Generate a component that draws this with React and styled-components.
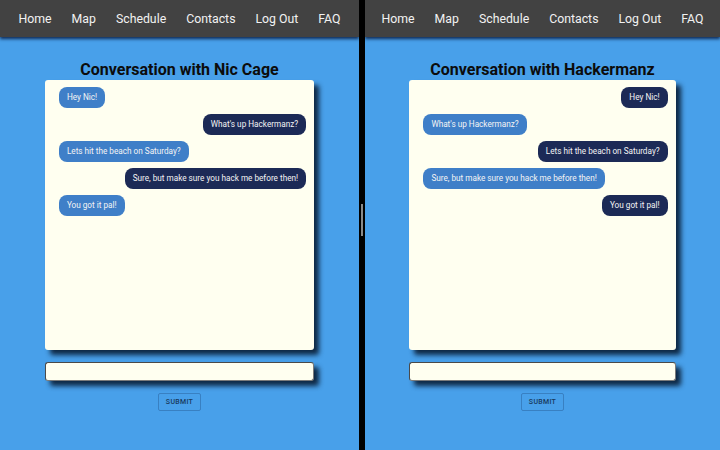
import styled, { createGlobalStyle } from "styled-components";

const GlobalStyle = createGlobalStyle`
  html, body {
    margin: 0;
    padding: 0;
    height: 100%;
    overflow: hidden;
  }
  body {
    font-family: Roboto, "Liberation Sans", sans-serif;
  }
`;

const Screen = styled.div`
  display: flex;
  width: 720px;
  height: 450px;
  background: #000;
`;

const Pane = styled.div`
  flex: ${(p) => (p.$fixed ? "0 0 359px" : "1")};
  display: flex;
  flex-direction: column;
  align-items: center;
  background: #48a0ea;
  overflow: hidden;
`;

const Divider = styled.div`
  flex: 0 0 6px;
  display: flex;
  align-items: center;
  justify-content: center;
  background: #000;
`;

const Handle = styled.div`
  width: 2px;
  height: 32px;
  margin-top: -10px;
  background: #8a8a8a;
`;

const NavBar = styled.nav`
  align-self: stretch;
  height: 37px;
  display: flex;
  align-items: center;
  justify-content: center;
  background: #424242;
  box-shadow: 0 2px 3px rgba(10, 30, 70, 0.9);
  position: relative;
  z-index: 1;
`;

const NavItem = styled.span`
  padding: 0 10px;
  font-size: 12.3px;
  color: #f2f2f2;
  white-space: nowrap;
`;

const Title = styled.h2`
  margin: 23px 0 0;
  font-size: 16px;
  line-height: 20px;
  font-weight: 700;
  color: #0c0c0c;
`;

const ChatBox = styled.div`
  box-sizing: border-box;
  width: 75%;
  height: 270px;
  padding: 7px 8px 0 14px;
  display: flex;
  flex-direction: column;
  gap: 6px;
  background: #fffff0;
  border-radius: 3px;
  box-shadow: 5px 5px 5px rgba(5, 20, 40, 0.85);
`;

const Bubble = styled.div`
  align-self: ${(p) => (p.$mine ? "flex-end" : "flex-start")};
  height: 21px;
  line-height: 21px;
  padding: 0 8px;
  border-radius: 8px;
  font-size: 8.2px;
  color: #f4f4f4;
  white-space: nowrap;
  background: ${(p) => (p.$mine ? "#1c2a56" : "#3f7fc8")};
`;

const Input = styled.input`
  box-sizing: border-box;
  width: 75%;
  height: 19px;
  margin-top: 12px;
  background: #fffff0;
  border: 1px solid #7a7a7a;
  border-top-color: #4a4a4a;
  border-left-color: #4a4a4a;
  border-radius: 3px;
  box-shadow: 5px 5px 5px rgba(5, 20, 40, 0.85);
  outline: none;
`;

const SubmitButton = styled.button`
  margin-top: 12px;
  width: 43px;
  height: 18px;
  padding: 0;
  background: transparent;
  border: 1px solid rgba(30, 70, 120, 0.35);
  border-radius: 2px;
  font-family: Roboto, "Liberation Sans", sans-serif;
  font-size: 7px;
  font-weight: 500;
  letter-spacing: 0.3px;
  color: #183a5e;
`;

const links = ["Home", "Map", "Schedule", "Contacts", "Log Out", "FAQ"];

const messages = [
  { from: "nic", text: "Hey Nic!" },
  { from: "hack", text: "What's up Hackermanz?" },
  { from: "nic", text: "Lets hit the beach on Saturday?" },
  { from: "hack", text: "Sure, but make sure you hack me before then!" },
  { from: "nic", text: "You got it pal!" },
];

const Conversation = ({ me, other, fixed }) => (
  <Pane $fixed={fixed}>
    <NavBar>
      {links.map((l) => (
        <NavItem key={l}>{l}</NavItem>
      ))}
    </NavBar>
    <Title>Conversation with {other}</Title>
    <ChatBox>
      {messages.map((m, i) => (
        <Bubble key={i} $mine={m.from !== me}>
          {m.text}
        </Bubble>
      ))}
    </ChatBox>
    <Input />
    <SubmitButton>SUBMIT</SubmitButton>
  </Pane>
);

const App = () => (
  <>
    <GlobalStyle />
    <Screen>
      <Conversation me="nic" other="Nic Cage" fixed />
      <Divider>
        <Handle />
      </Divider>
      <Conversation me="hack" other="Hackermanz" />
    </Screen>
  </>
);

export default App;
